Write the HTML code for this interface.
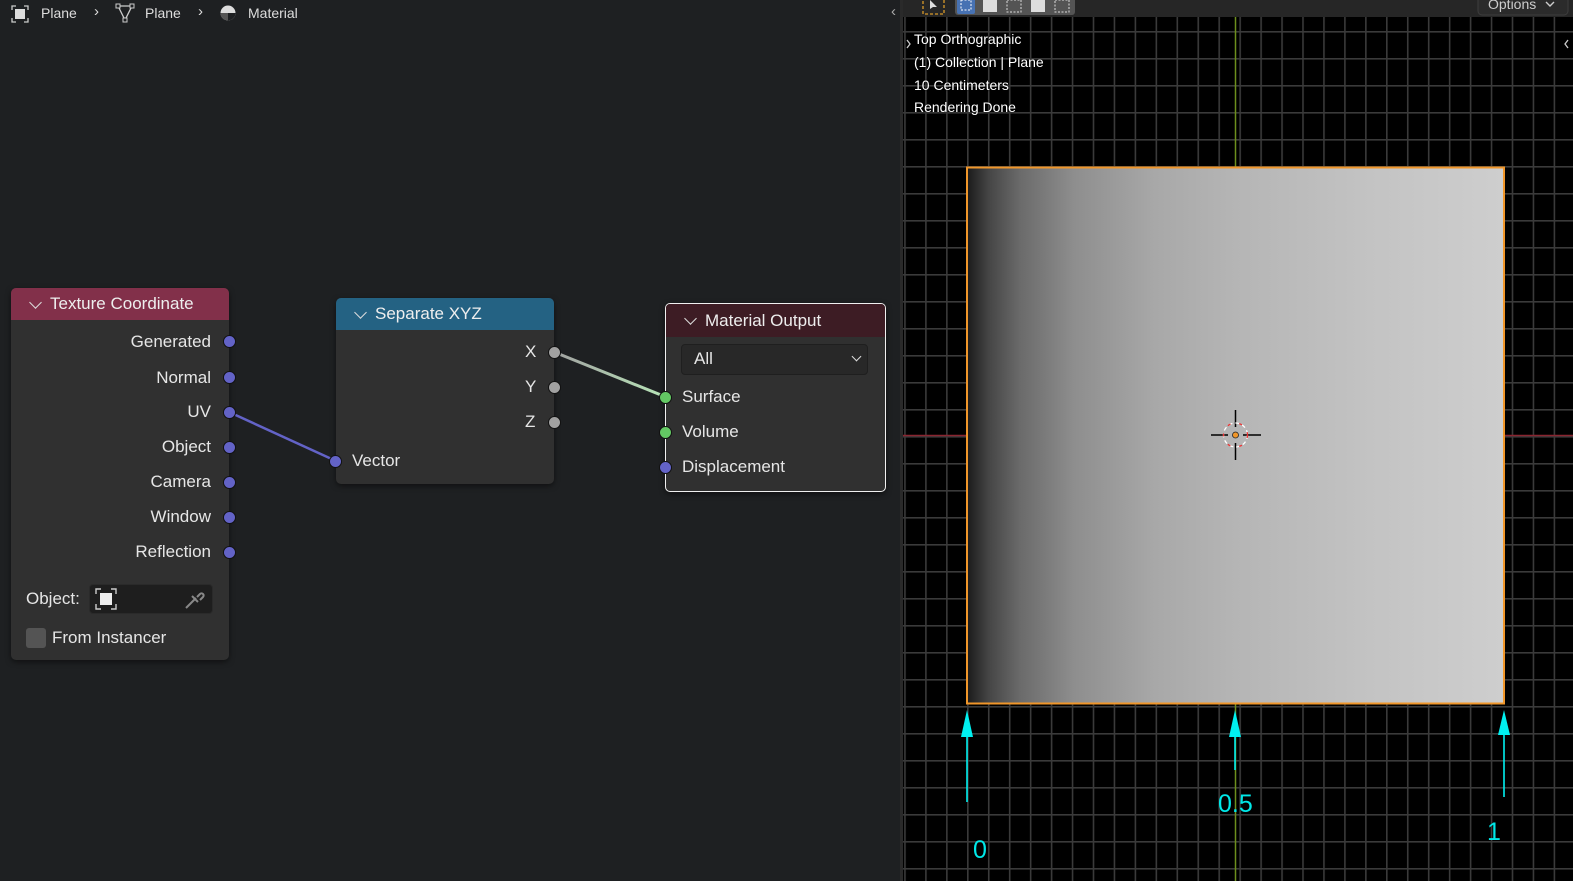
<!DOCTYPE html>
<html><head><meta charset="utf-8"><style>
*{margin:0;padding:0;box-sizing:border-box}
body{width:1573px;height:881px;overflow:hidden;background:#1e2022;font-family:"Liberation Sans","DejaVu Sans",sans-serif;position:relative;color:#e6e6e6}
.abs{position:absolute}
.node{position:absolute;background:#303030;border-radius:5px;box-shadow:0 2px 6px rgba(0,0,0,.5)}
.hdr{height:32px;border-radius:5px 5px 0 0;font-size:17px;line-height:32px;padding-left:39px;color:#eee;position:relative}
.hdr:before{content:"";position:absolute;left:20px;top:10px;width:8px;height:8px;border-right:1.6px solid #ddd;border-bottom:1.6px solid #ddd;transform:rotate(45deg)}
.lbl{position:absolute;font-size:17px;color:#e6e6e6;line-height:20px}
.sock{position:absolute;width:13px;height:13px;border-radius:50%;border:1px solid #111}
.pu{background:#6363c7}.gr{background:#a1a1a1}.gn{background:#63c763}
.vt{position:absolute;left:914px;font-size:14px;color:#fff;text-shadow:0 0 2px #000}
</style></head><body>
<!-- breadcrumbs -->
<div class="abs" style="left:0;top:0;width:903px;height:27px;font-size:14px;color:#ddd">
 <svg class="abs" style="left:11px;top:5px" width="18" height="18" viewBox="0 0 18 18"><path d="M1 5V1h4M13 1h4v4M17 13v4h-4M5 17H1v-4" stroke="#ccc" fill="none" stroke-width="1.3"/><rect x="4" y="4" width="10" height="10" fill="#ddd"/></svg>
 <span class="abs" style="left:41px;top:5px">Plane</span>
 <span class="abs" style="left:94px;top:3px;font-size:15px">›</span>
 <svg class="abs" style="left:115px;top:3px" width="20" height="20" viewBox="0 0 20 20"><path d="M3 3L10 17L17 3Z" stroke="#ccc" fill="none" stroke-width="1.3"/><rect x="1" y="1" width="4" height="4" fill="#1e2022" stroke="#ccc"/><rect x="15" y="1" width="4" height="4" fill="#1e2022" stroke="#ccc"/><rect x="8" y="15" width="4" height="4" fill="#1e2022" stroke="#ccc"/></svg>
 <span class="abs" style="left:145px;top:5px">Plane</span>
 <span class="abs" style="left:198px;top:3px;font-size:15px">›</span>
 <svg class="abs" style="left:219px;top:4px" width="18" height="18" viewBox="0 0 18 18"><circle cx="9" cy="9" r="7.5" fill="#ddd"/><path d="M9 9H16.5A7.5 7.5 0 0 1 9 16.5Z" fill="#1e2022"/><path d="M1.5 9H9V16.5A7.5 7.5 0 0 1 1.5 9Z" fill="#555"/></svg>
 <span class="abs" style="left:248px;top:5px">Material</span>
 <span class="abs" style="left:891px;top:3px;font-size:15px;color:#aaa">‹</span>
</div>

<!-- links -->
<svg class="abs" style="left:0;top:0" width="903" height="881">
 <defs><linearGradient id="lg" x1="0" x2="1"><stop offset="0" stop-color="#a1a1a1"/><stop offset="1" stop-color="#b8e6b8"/></linearGradient></defs>
 <line x1="229" y1="412" x2="336" y2="461" stroke="#6363c7" stroke-width="2.5"/>
 <line x1="554" y1="352" x2="666" y2="397" stroke="url(#lg)" stroke-width="3"/>
</svg>

<!-- Texture Coordinate -->
<div class="node" style="left:11px;top:288px;width:218px;height:372px">
 <div class="hdr" style="background:#82304a">Texture Coordinate</div>
</div>
<div class="lbl" style="right:1362px;top:332px">Generated</div>
<div class="lbl" style="right:1362px;top:368px">Normal</div>
<div class="lbl" style="right:1362px;top:402px">UV</div>
<div class="lbl" style="right:1362px;top:437px">Object</div>
<div class="lbl" style="right:1362px;top:472px">Camera</div>
<div class="lbl" style="right:1362px;top:507px">Window</div>
<div class="lbl" style="right:1362px;top:542px">Reflection</div>
<div class="sock pu" style="left:223px;top:335px"></div>
<div class="sock pu" style="left:223px;top:371px"></div>
<div class="sock pu" style="left:223px;top:406px"></div>
<div class="sock pu" style="left:223px;top:441px"></div>
<div class="sock pu" style="left:223px;top:476px"></div>
<div class="sock pu" style="left:223px;top:511px"></div>
<div class="sock pu" style="left:223px;top:546px"></div>
<div class="lbl" style="left:26px;top:589px">Object:</div>
<div class="abs" style="left:89px;top:584px;width:124px;height:30px;background:#1e1e1e;border-radius:4px;border:1px solid #2a2a2a"></div>
<svg class="abs" style="left:95px;top:588px" width="22" height="22" viewBox="0 0 22 22"><path d="M1 6V1h5M16 1h5v5M21 16v5h-5M6 21H1v-5" stroke="#ccc" fill="none" stroke-width="1.4"/><rect x="5" y="5" width="12" height="12" fill="#eee"/></svg>
<svg class="abs" style="left:183px;top:589px" width="22" height="22" viewBox="0 0 22 22"><path d="M3 19L13 9M9 7l6 6M14 8l3-3a2 2 0 0 1 3 3l-3 3" stroke="#888" fill="none" stroke-width="2"/></svg>
<div class="abs" style="left:26px;top:628px;width:20px;height:20px;background:#545454;border-radius:3px"></div>
<div class="lbl" style="left:52px;top:628px">From Instancer</div>

<!-- Separate XYZ -->
<div class="node" style="left:336px;top:298px;width:218px;height:186px">
 <div class="hdr" style="background:#246283">Separate XYZ</div>
</div>
<div class="lbl" style="left:525px;top:342px">X</div>
<div class="lbl" style="left:525px;top:377px">Y</div>
<div class="lbl" style="left:525px;top:412px">Z</div>
<div class="sock gr" style="left:548px;top:346px"></div>
<div class="sock gr" style="left:548px;top:381px"></div>
<div class="sock gr" style="left:548px;top:416px"></div>
<div class="sock pu" style="left:329px;top:455px"></div>
<div class="lbl" style="left:352px;top:451px">Vector</div>

<!-- Material Output -->
<div class="node" style="left:665px;top:303px;width:221px;height:189px;border:1.5px solid #f0f0f0">
 <div class="hdr" style="background:#3d1c24;height:33px;line-height:33px;border-radius:4px 4px 0 0">Material Output</div>
</div>
<div class="abs" style="left:681px;top:344px;width:187px;height:31px;background:#282828;border:1px solid #1f1f1f;border-radius:4px"></div>
<div class="lbl" style="left:694px;top:349px">All</div>
<div class="abs" style="left:853px;top:353px;width:7px;height:7px;border-right:1.5px solid #ddd;border-bottom:1.5px solid #ddd;transform:rotate(45deg)"></div>
<div class="sock gn" style="left:659px;top:391px"></div>
<div class="sock gn" style="left:659px;top:426px"></div>
<div class="sock pu" style="left:659px;top:461px"></div>
<div class="lbl" style="left:682px;top:387px">Surface</div>
<div class="lbl" style="left:682px;top:422px">Volume</div>
<div class="lbl" style="left:682px;top:457px">Displacement</div>

<!-- viewport -->
<div class="abs" style="left:900px;top:0;width:4px;height:881px;background:#2a2a2a"></div>
<svg class="abs" style="left:903px;top:0" width="670" height="881">
 <defs><pattern id="g" width="20.95" height="27" patternUnits="userSpaceOnUse" x="1.15" y="4"><rect width="20.95" height="27" fill="#000"/><rect x="0" y="0" width="1.6" height="27" fill="#3a3a3a"/><rect x="0" y="0" width="20.95" height="1.6" fill="#3a3a3a"/></pattern>
 <linearGradient id="pg" x1="0" x2="1"><stop offset="0" stop-color="#1a1a1a"/><stop offset=".04" stop-color="#454545"/><stop offset=".1" stop-color="#6b6b6b"/><stop offset=".2" stop-color="#8e8e8e"/><stop offset=".35" stop-color="#a8a8a8"/><stop offset=".5" stop-color="#b5b5b5"/><stop offset=".75" stop-color="#c3c3c3"/><stop offset="1" stop-color="#cecece"/></linearGradient></defs>
 <rect width="670" height="881" fill="url(#g)"/>
 <line x1="0" y1="435.5" x2="670" y2="435.5" stroke="#8a2530" stroke-width="1.5"/>
 <line x1="332.5" y1="17" x2="332.5" y2="881" stroke="#6d8f1d" stroke-width="1.5"/>
 <rect x="64" y="167.5" width="537" height="536" fill="url(#pg)" stroke="#f0962a" stroke-width="2"/>
 <g stroke="#000" stroke-width="1.5"><line x1="332.5" y1="410" x2="332.5" y2="427"/><line x1="332.5" y1="443" x2="332.5" y2="460"/><line x1="308" y1="435" x2="325" y2="435"/><line x1="340" y1="435" x2="358" y2="435"/></g>
 <circle cx="332.5" cy="435" r="12" fill="none" stroke="#fff" stroke-width="1.3" stroke-dasharray="4 3"/>
 <circle cx="332.5" cy="435" r="12" fill="none" stroke="#e33" stroke-width="1.3" stroke-dasharray="3 9"/>
 <circle cx="332.5" cy="435" r="3" fill="#f0962a" stroke="#222" stroke-width=".8"/>
 <g fill="#00f0f0" stroke="#00f0f0" stroke-width="1.6">
  <line x1="64" y1="730" x2="64" y2="802"/><path d="M64 710L58 737H70Z" stroke="none"/>
  <line x1="332" y1="730" x2="332" y2="770"/><path d="M332 710L326 737H338Z" stroke="none"/>
  <line x1="601" y1="730" x2="601" y2="797"/><path d="M601 710L595 735H607Z" stroke="none"/>
 </g>
 <g fill="#00e8e8" font-family="Liberation Sans,sans-serif" font-size="25"><text x="70" y="858">0</text><text x="315" y="812">0.5</text><text x="584" y="840">1</text></g>
 <rect x="0" y="0" width="670" height="17" fill="#262626"/>
 <rect x="20" y="-4" width="21" height="18" fill="none" stroke="#d89a2a" stroke-width="1.3" stroke-dasharray="3 2"/>
 <path d="M27 0L27 9L30 7L34 7Z" fill="#ddd"/>
 <rect x="52" y="-4" width="120" height="19" rx="3" fill="#545454"/>
 <rect x="54" y="-2" width="18" height="16" rx="2" fill="#4772b3"/>
 <rect x="58" y="0" width="10" height="10" fill="none" stroke="#fff" stroke-dasharray="2 1.5"/>
 <rect x="80" y="0" width="14" height="12" fill="#ddd"/><rect x="104" y="0" width="14" height="12" fill="none" stroke="#ddd" stroke-dasharray="2 1.5"/><rect x="128" y="0" width="14" height="12" fill="#ddd"/><rect x="152" y="0" width="14" height="12" fill="none" stroke="#ddd" stroke-dasharray="2 1.5"/>
 <rect x="575" y="-5" width="90" height="20" rx="4" fill="#2b2b2b" stroke="#3e3e3e"/>
 <text x="585" y="9" fill="#ccc" font-family="Liberation Sans,sans-serif" font-size="14">Options</text>
 <path d="M643 2l4 4 4-4" stroke="#ccc" fill="none" stroke-width="1.4"/>
 <path d="M4 40l3 4-3 4" stroke="#ccc" fill="none" stroke-width="1.3"/>
 <path d="M665 40l-3 4 3 4" stroke="#ccc" fill="none" stroke-width="1.3"/>
</svg>
<div class="vt" style="top:31px">Top Orthographic</div>
<div class="vt" style="top:54px">(1) Collection | Plane</div>
<div class="vt" style="top:77px">10 Centimeters</div>
<div class="vt" style="top:99px">Rendering Done</div>
</body></html>
